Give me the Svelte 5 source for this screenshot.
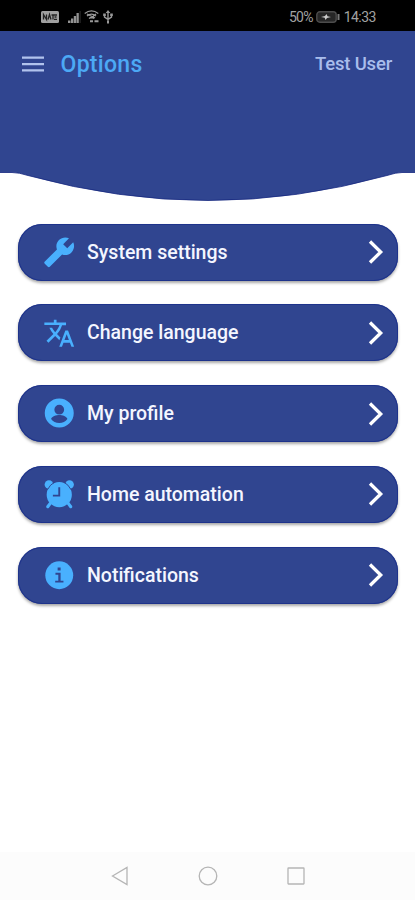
<script lang="ts">
    type Option = { label: string; icon: string };

    const options: Option[] = [
        { label: 'System settings', icon: 'wrench' },
        { label: 'Change language', icon: 'translate' },
        { label: 'My profile', icon: 'profile' },
        { label: 'Home automation', icon: 'alarm' },
        { label: 'Notifications', icon: 'info' },
    ];
</script>

<div class="screen">
    <div class="status">
        <div class="status-left">
            <svg width="18" height="12" viewBox="0 0 18 12">
                <rect width="18" height="12" rx="1.5" fill="#a0a0a0" />
                <path d="M2.500 8.500v-5l3 5v-5M7 8.500l1.500-5 1.500 5M10.500 4h3M12 4v4.500M13 4h3M13.500 6h2M13 8.300h3" fill="none" stroke="#222" stroke-width="1.300" />
            </svg>
            <svg class="signal" width="13" height="12" viewBox="0 0 13 12" fill="#929292">
                <path d="M0 9.500h2.500V12H0zM3 7.500h2.300V12H3zM5.800 5h2.300v7H5.800zM8.500 2h2.300v10H8.500z" />
                <path d="M11.600 0h1v12h-1z" fill="#303030" />
            </svg>
            <svg class="wifi" width="16" height="13" viewBox="0 0 16 13" fill="none" stroke="#999" stroke-width="1.300">
                <path d="M.7 3.500Q7.500-1.800 14.300 3.500M3 6q4.500-3.700 9 0M5 8.500q2.500-2 5 0M3 4l8 4M12 4L7 8" />
                <path d="M6 11.300h3M10.500 11.300h4" stroke-width="2" />
            </svg>
            <svg class="usb" width="10" height="14" viewBox="0 0 10 14" fill="none" stroke="#999" stroke-width="1.400">
                <path d="M5 2v10M1.500 4.500V7L5 9.300 8.500 7V4.500" />
                <path d="M5 0l2.300 3H2.700zM.2 3.500h2.600v2.500H.2zM7.200 3.500h2.600v2.500H7.200zM4 11h2v2.500H4z" fill="#999" stroke="none" />
            </svg>
        </div>
        <div class="status-right">
            <span class="percent">50%</span>
            <svg width="24" height="12" viewBox="0 0 24 12">
                <rect x=".8" y=".8" width="19.400" height="10.400" rx="3" fill="#262626" stroke="#4c4c4c" stroke-width="1.400" />
                <path d="M5 6l4-1 1.500-2 1 2.200L15 6l-4 1-1.500 2-.8-2.200z" fill="#ccc" />
                <path d="M22.500 3v6" stroke="#777" stroke-width="2" />
            </svg>
            <span class="time">14:33</span>
        </div>
    </div>

    <header>
        <div class="bar">
            <svg class="menu" width="22" height="16" viewBox="0 0 22 16">
                <path d="M0 1.700h22M0 8.200h22M0 14.300h22" stroke="#b1c3ed" stroke-width="2.300" />
            </svg>
            <h1>Options</h1>
            <span class="user">Test User</span>
        </div>
    </header>
    <svg class="wave" width="415" height="31" viewBox="0 0 415 31">
        <path d="M0 0H415V2.500H402Q396 2.500 387 5.500 297 30.500 208 30.500T28 5.500Q19 2.500 12 2.500H0Z" fill="#304590" />
        <path d="M415 2.500H402Q396 2.500 387 5.500 297 30.500 208 30.500T28 5.500Q19 2.500 12 2.500H0" fill="none" stroke="#15277f" stroke-width=".8" />
    </svg>

    <main>
        {#each options as option}
            <button class="option">
                <svg class="icon" viewBox="0 0 24 24" fill="#49b0fe">
                    {#if option.icon === 'wrench'}
                        <path transform="matrix(-1 0 0 1 23.900 0)" d="M22.700 19l-9.100-9.100c.9-2.300.4-5-1.500-6.900-2-2-5-2.400-7.400-1.300L9 6 6 9 1.600 4.700C.4 7.100.9 10.100 2.900 12.100c1.900 1.900 4.600 2.400 6.900 1.500l9.100 9.100c.4.4 1 .4 1.400 0l2.300-2.300c.5-.4.5-1.100.1-1.400z" />
                    {:else if option.icon === 'translate'}
                        <path d="M12.870 15.070l-2.540-2.510.03-.03c1.740-1.940 2.980-4.170 3.710-6.530H17V4h-7V2H8v2H1v1.990h11.170C11.500 7.920 10.440 9.750 9 11.350 8.070 10.320 7.300 9.190 6.690 8h-2c.73 1.630 1.730 3.170 2.980 4.560l-5.090 5.020L4 19l5-5 3.110 3.110.76-2.040zM18.500 10h-2L12 22h2l1.120-3h4.750L21 22h2l-4.500-12zm-2.620 7l1.620-4.330L19.120 17h-3.240z" />
                    {:else if option.icon === 'profile'}
                        <path fill-rule="evenodd" d="M12 1.300a10.700 10.700 0 1 0 0 21.400 10.700 10.700 0 0 0 0-21.400zM12 6a3.600 3.600 0 1 1 0 7.200A3.600 3.600 0 0 1 12 6zm0 13.400c-2.500 0-4.700-1.100-6-2.900 0-2 4-3.100 6-3.100s6 1.100 6 3.100c-1.300 1.800-3.500 2.900-6 2.900z" transform="translate(0 -.2)" />
                    {:else if option.icon === 'alarm'}
                        <circle cx="12" cy="12.300" r="9.300" />
                        <circle cx="4.400" cy="4.800" r="3.200" />
                        <circle cx="19.600" cy="4.800" r="3.200" />
                        <path d="M3.300 8.600Q5.300 4.700 8.600 3.100M20.700 8.600Q18.700 4.700 15.400 3.100" fill="none" stroke="#304590" stroke-width=".7" />
                        <path d="M5.500 18.500l-2 2.700M18.500 18.500l2 2.700" stroke="#49b0fe" stroke-width="2.300" stroke-linecap="round" />
                        <path d="M12 6.800v6.200H7.300" fill="none" stroke="#304590" stroke-width="1.400" />
                    {:else}
                        <circle cx="12" cy="12" r="10.300" />
                        <path d="M10.800 6.300h2.200v2.100h-2.200zM9.200 10.200H13v5.800h2.100v1.400H9v-1.400h2.300v-4.400H9.200z" fill="#304590" />
                    {/if}
                </svg>
                <span class="label">{option.label}</span>
                <svg class="chevron" width="16" height="26" viewBox="0 0 16 26">
                    <path d="M2 2.500L12.700 13 2 23.500" fill="none" stroke="#fff" stroke-width="3.300" />
                </svg>
            </button>
        {/each}
    </main>

    <nav>
        <svg width="18" height="20" viewBox="0 0 18 20"><path d="M1.500 10L16 1.500v17z" /></svg>
        <svg width="20" height="20" viewBox="0 0 20 20"><circle cx="10" cy="10" r="8.800" /></svg>
        <svg width="18" height="18" viewBox="0 0 18 18"><rect x="1" y="1" width="16" height="16" rx=".5" /></svg>
    </nav>
</div>

<style>
    .screen {
        display: flex;
        flex-direction: column;
        width: 415px;
        height: 900px;
        overflow: hidden;
        background: #fff;
        font-family: Roboto, "Liberation Sans", sans-serif;
    }
    .status {
        display: flex;
        justify-content: space-between;
        align-items: center;
        flex: none;
        box-sizing: border-box;
        height: 31px;
        padding: 2px 39px 0 41px;
        background: #000;
        color: #a2a2a2;
        font-size: 14px;
    }
    .status-left,
    .status-right {
        display: flex;
        align-items: center;
    }
    .signal {
        margin-left: 9px;
    }
    .wifi {
        margin-left: 3px;
    }
    .usb {
        margin-left: 3px;
    }
    .percent {
        margin-right: 3px;
        letter-spacing: -0.8px;
    }
    .time {
        margin-left: 4px;
        letter-spacing: -0.5px;
    }
    header {
        flex: none;
        height: 139px;
        background: #304590;
    }
    .bar {
        display: flex;
        align-items: center;
        height: 66px;
        padding: 0 23px 0 22px;
    }
    h1 {
        margin: 0 auto 0 16.5px;
        color: #4ca9f5;
        font-size: 23px;
        font-weight: 500;
        letter-spacing: 0.3px;
    }
    .user {
        color: #a9bdec;
        font-size: 18.5px;
        font-weight: 500;
        letter-spacing: -0.2px;
    }
    .wave {
        display: block;
        flex: none;
    }
    main {
        display: flex;
        flex-direction: column;
        flex: 1;
        gap: 23.75px;
        padding: 22.5px 17px 0 18px;
    }
    .option {
        display: flex;
        align-items: center;
        box-sizing: border-box;
        width: 100%;
        height: 57px;
        padding: 0 14px 0 25px;
        border: 0;
        border-radius: 24px;
        background: #304590;
        box-shadow: inset 0 0 0 1px #1e338b, 0 2px 3px rgba(0, 0, 0, 0.35);
        color: #f4f6ff;
        font-family: inherit;
        font-size: 19.5px;
        font-weight: 500;
    }
    .icon {
        width: 32.5px;
        height: 32.5px;
        margin-right: 11.5px;
    }
    .label {
        margin-right: auto;
    }
    nav {
        display: flex;
        justify-content: center;
        align-items: center;
        gap: 69px;
        flex: none;
        height: 48px;
        background: #fcfcfc;
    }
    nav path,
    nav circle,
    nav rect {
        fill: none;
        stroke: #b5b5b5;
        stroke-width: 1.3;
    }
</style>
